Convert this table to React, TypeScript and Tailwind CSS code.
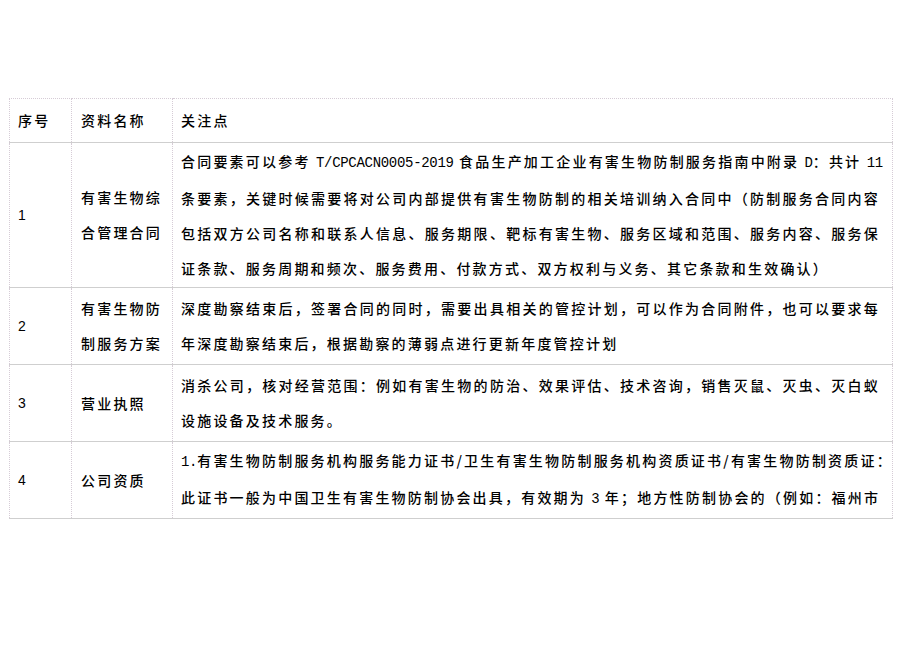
import React from 'react';

const FONT = { fontFamily: '"Noto Sans CJK SC", "Liberation Sans", sans-serif' };

const Latin: React.FC<{ children: React.ReactNode }> = ({ children }) => (
  <span className="font-['Liberation_Mono',monospace] tracking-[-0.3px]">{children}</span>
);

interface Row {
  no: string;
  name: React.ReactNode;
  lines: React.ReactNode[];
}

const rows: Row[] = [
  {
    no: '1',
    name: (
      <>
        有害生物综
        <br />
        合管理合同
      </>
    ),
    lines: [
      <>
        合同要素可以参考 <Latin>T/CPCACN0005-2019</Latin> 食品生产加工企业有害生物防制服务指南中附录 <Latin>D</Latin>：共计 <Latin>11</Latin>
      </>,
      '条要素，关键时候需要将对公司内部提供有害生物防制的相关培训纳入合同中（防制服务合同内容',
      '包括双方公司名称和联系人信息、服务期限、靶标有害生物、服务区域和范围、服务内容、服务保',
      '证条款、服务周期和频次、服务费用、付款方式、双方权利与义务、其它条款和生效确认）',
    ],
  },
  {
    no: '2',
    name: (
      <>
        有害生物防
        <br />
        制服务方案
      </>
    ),
    lines: [
      '深度勘察结束后，签署合同的同时，需要出具相关的管控计划，可以作为合同附件，也可以要求每',
      '年深度勘察结束后，根据勘察的薄弱点进行更新年度管控计划',
    ],
  },
  {
    no: '3',
    name: '营业执照',
    lines: [
      '消杀公司，核对经营范围：例如有害生物的防治、效果评估、技术咨询，销售灭鼠、灭虫、灭白蚁',
      '设施设备及技术服务。',
    ],
  },
  {
    no: '4',
    name: '公司资质',
    lines: [
      <>
        <Latin>1.</Latin>有害生物防制服务机构服务能力证书/卫生有害生物防制服务机构资质证书/有害生物防制资质证：
      </>,
      <>
        此证书一般为中国卫生有害生物防制协会出具，有效期为 <Latin>3</Latin> 年；地方性防制协会的（例如：福州市
      </>,
    ],
  },
];

const cellBase = 'border border-dotted border-[#d6ccd6] align-middle';

export default function App() {
  return (
    <div className="w-[920px] h-[651px] bg-white text-black text-[14px] font-medium" style={FONT}>
      <div className="pt-[98px] pl-[9px]">
        <table className="table-fixed border-collapse w-[883px]">
          <colgroup>
            <col className="w-[62px]" />
            <col className="w-[101px]" />
            <col className="w-[720px]" />
          </colgroup>
          <tbody className="tracking-[2.2px] leading-[35px]">
            <tr className="h-[44px] border-b border-solid border-b-[#cfcfcf]">
              <td className={`${cellBase} pl-[8px]`}>序号</td>
              <td className={`${cellBase} pl-[9px]`}>资料名称</td>
              <td className={`${cellBase} pl-[8px]`}>关注点</td>
            </tr>
            {rows.map((row, i) => (
              <tr
                key={row.no}
                className={`${i === 0 ? 'h-[145px]' : 'h-[77px]'} border-b border-solid border-b-[#cfcfcf]`}
              >
                <td className={`${cellBase} pl-[8px] font-normal font-['Liberation_Sans',sans-serif]`}>{row.no}</td>
                <td className={`${cellBase} pl-[9px] pr-[4px]`}>{row.name}</td>
                <td className={`${cellBase} pl-[8px] pr-[12px]`}>
                  {row.lines.map((line, j) => (
                    <div
                      key={j}
                      className={
                        j < row.lines.length - 1 || row.no === '4'
                          ? 'text-justify [text-align-last:justify] whitespace-nowrap'
                          : 'whitespace-nowrap'
                      }
                    >
                      {line}
                    </div>
                  ))}
                </td>
              </tr>
            ))}
          </tbody>
        </table>
      </div>
    </div>
  );
}
